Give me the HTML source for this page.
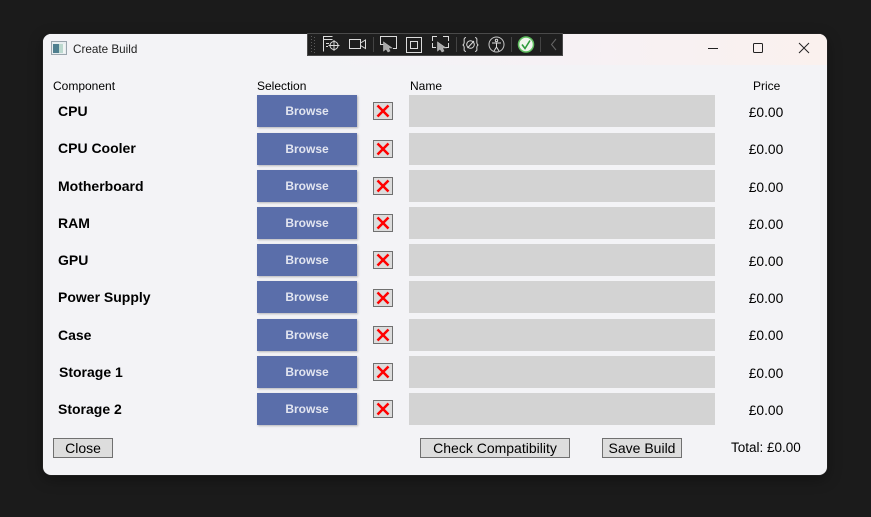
<!DOCTYPE html>
<html><head><meta charset="utf-8"><style>
html,body{margin:0;padding:0;width:871px;height:517px;overflow:hidden;background:#1b1b1b;font-family:"Liberation Sans",sans-serif;color:#000}
div{position:absolute;white-space:nowrap}
#w{left:43px;top:34px;width:784px;height:441px;background:#f3f3f6;border-radius:8px;overflow:hidden;box-shadow:0 0 1px #555,0 4px 14px rgba(0,0,0,.35)}
#tb{left:0;top:0;width:784px;height:31px;background:linear-gradient(90deg,#f3f3f6 0,#f3f3f6 35%,#f6f1f5 65%,#faf1ee 100%)}
.h{font-size:12px;line-height:14px;top:45px}
.l{font-weight:bold;font-size:14px;line-height:16px}
.br{left:214px;width:100px;height:32px;background:#5a6eaa;box-shadow:1px 1px 2px rgba(0,0,0,.25);color:#e2e5f0;font-weight:bold;font-size:12px;line-height:33px;text-align:center}
.x{left:330px;width:18px;height:16px;background:#dcdcdc;border:1px solid #707070}
.x svg{position:absolute;left:1px;top:0}
.n{left:366px;width:306px;height:32px;background:#d3d3d3}
.p{left:690px;width:66px;text-align:center;font-size:13.8px;line-height:18px}
.b{top:404px;height:18px;background:#dddddd;border:1px solid #707070;font-size:14px;line-height:19px;text-align:center}
#t{left:307px;top:33px;width:254px;height:21px;background:#1e1e1e;border:1px solid #4a4a4a}
</style></head><body>
<div id="w">
<div id="tb"></div>
<svg style="position:absolute;left:8px;top:7px" width="16" height="14" viewBox="0 0 16 14"><rect x=".5" y=".5" width="15" height="13" fill="#e8eef0" stroke="#9aa5ad"/><rect x="2" y="3" width="6" height="9" fill="#4f7f8f"/><rect x="8" y="3" width="4" height="9" fill="#bcd9cf"/><rect x="12" y="3" width="2" height="9" fill="#f2f5f5"/></svg>
<div style="left:30px;top:8px;font-size:11.7px;line-height:15px;color:#222">Create Build</div>
<svg style="position:absolute;left:660px;top:6px" width="124" height="16" viewBox="0 0 124 16" fill="none" stroke="#222" stroke-width="1"><path d="M5 8.5H15"/><rect x="50.500" y="3.500" width="9" height="9" rx="1"/><path d="M96 3L106 13M106 3L96 13"/></svg>
<div class="h" style="left:10px">Component</div>
<div class="h" style="left:214px">Selection</div>
<div class="h" style="left:367px">Name</div>
<div class="h" style="left:710px">Price</div>

<div class="l" style="left:15px;top:69px">CPU</div>
<div class="l" style="left:15px;top:106px">CPU Cooler</div>
<div class="l" style="left:15px;top:144px">Motherboard</div>
<div class="l" style="left:15px;top:181px">RAM</div>
<div class="l" style="left:15px;top:218px">GPU</div>
<div class="l" style="left:15px;top:255px">Power Supply</div>
<div class="l" style="left:15px;top:293px">Case</div>
<div class="l" style="left:16px;top:330px">Storage 1</div>
<div class="l" style="left:15px;top:367px">Storage 2</div>

<div class="br" style="top:61px">Browse</div>
<div class="br" style="top:98.500px">Browse</div>
<div class="br" style="top:135.500px">Browse</div>
<div class="br" style="top:173px">Browse</div>
<div class="br" style="top:210px">Browse</div>
<div class="br" style="top:247px">Browse</div>
<div class="br" style="top:284.500px">Browse</div>
<div class="br" style="top:322px">Browse</div>
<div class="br" style="top:359px">Browse</div>

<div class="x" style="top:68px"><svg width="16" height="16"><path d="M2.500 2.500L13.500 13.500M13.500 2.500L2.500 13.500" stroke="#f00" stroke-width="2.500"/></svg></div>
<div class="x" style="top:106px"><svg width="16" height="16"><path d="M2.500 2.500L13.500 13.500M13.500 2.500L2.500 13.500" stroke="#f00" stroke-width="2.500"/></svg></div>
<div class="x" style="top:143px"><svg width="16" height="16"><path d="M2.500 2.500L13.500 13.500M13.500 2.500L2.500 13.500" stroke="#f00" stroke-width="2.500"/></svg></div>
<div class="x" style="top:180px"><svg width="16" height="16"><path d="M2.500 2.500L13.500 13.500M13.500 2.500L2.500 13.500" stroke="#f00" stroke-width="2.500"/></svg></div>
<div class="x" style="top:217px"><svg width="16" height="16"><path d="M2.500 2.500L13.500 13.500M13.500 2.500L2.500 13.500" stroke="#f00" stroke-width="2.500"/></svg></div>
<div class="x" style="top:255px"><svg width="16" height="16"><path d="M2.500 2.500L13.500 13.500M13.500 2.500L2.500 13.500" stroke="#f00" stroke-width="2.500"/></svg></div>
<div class="x" style="top:292px"><svg width="16" height="16"><path d="M2.500 2.500L13.500 13.500M13.500 2.500L2.500 13.500" stroke="#f00" stroke-width="2.500"/></svg></div>
<div class="x" style="top:329px"><svg width="16" height="16"><path d="M2.500 2.500L13.500 13.500M13.500 2.500L2.500 13.500" stroke="#f00" stroke-width="2.500"/></svg></div>
<div class="x" style="top:366px"><svg width="16" height="16"><path d="M2.500 2.500L13.500 13.500M13.500 2.500L2.500 13.500" stroke="#f00" stroke-width="2.500"/></svg></div>

<div class="n" style="top:61px"></div>
<div class="n" style="top:98.500px"></div>
<div class="n" style="top:135.500px"></div>
<div class="n" style="top:173px"></div>
<div class="n" style="top:210px"></div>
<div class="n" style="top:247px"></div>
<div class="n" style="top:284.500px"></div>
<div class="n" style="top:322px"></div>
<div class="n" style="top:359px"></div>

<div class="p" style="top:70px">£0.00</div>
<div class="p" style="top:107px">£0.00</div>
<div class="p" style="top:145px">£0.00</div>
<div class="p" style="top:182px">£0.00</div>
<div class="p" style="top:219px">£0.00</div>
<div class="p" style="top:256px">£0.00</div>
<div class="p" style="top:293px">£0.00</div>
<div class="p" style="top:331px">£0.00</div>
<div class="p" style="top:368px">£0.00</div>

<div class="b" style="left:10px;width:58px">Close</div>
<div class="b" style="left:377px;width:148px">Check Compatibility</div>
<div class="b" style="left:559px;width:78px">Save Build</div>
<div style="left:688px;top:406px;font-size:13.500px;line-height:16px">Total: £0.00</div>
</div>

<div id="t">
<svg style="position:absolute;left:0;top:0" width="254" height="21" viewBox="0 0 254 21" fill="none" stroke="#dcdcdc" stroke-width="1">
<path d="M3.500 2v17M6.500 3v16" stroke="#5a5a5a" stroke-dasharray="1 2"/>
<path d="M15.500 17.500V2.500H24.500M15.500 5.500H24.500M18 9.500H21M18 12.500H20"/><circle cx="26" cy="11.500" r="4"/><path d="M26 6v11M20.500 11.500H31.500" stroke-width=".9"/>
<rect x="41.500" y="5.500" width="11" height="9"/><path d="M52.500 9L57.500 6V14.500L52.500 11.500"/>
<path d="M65.500 3V18M148.500 3V18M203.500 3V18M232.500 3V18" stroke="#444"/>
<path d="M75.500 10.500H72.500V2.500H88.500V14.500H85"/><path d="M75.500 8V17L78 15L80 18L82 17L80.500 14H84Z" fill="#aaa" stroke="#bbb" stroke-width=".6"/>
<rect x="98.500" y="3.500" width="15" height="15"/><rect x="102.500" y="7.500" width="7" height="7"/>
<path d="M124.500 7V2.500H129M135 2.500H140.500V7M124.500 9V13.500H128M137 13.500H140.500V9"/><path d="M129.500 8V17L132 15L134 18L136 17L134.500 14H138Z" fill="#aaa" stroke="#bbb" stroke-width=".6"/>
<path d="M158 3.500C154 4 158 9 155 11C158 13 154 17 158 17.500M167 3.500C171 4 167 9 170 11C167 13 171 17 167 17.500"/><circle cx="162.500" cy="10.500" r="3.800"/><path d="M159.500 14L166 7"/>
<circle cx="188.500" cy="10.500" r="7.500" stroke="#c8c8c8"/><circle cx="188.500" cy="6.500" r="1.200"/><path d="M184 9H193M188.500 9V13M188.500 13L186 17M188.500 13L191 17"/>
<circle cx="218" cy="10.500" r="7.500" stroke="#5fbf5f" stroke-width="1.500" fill="#f0f5ee"/><path d="M214 10.500L217 14.500L222 6.500" stroke="#2c9a3c" stroke-width="1.600"/>
<path d="M248 5L243.500 10.500L248 16" stroke="#666"/>
</svg>
</div>
</body></html>
